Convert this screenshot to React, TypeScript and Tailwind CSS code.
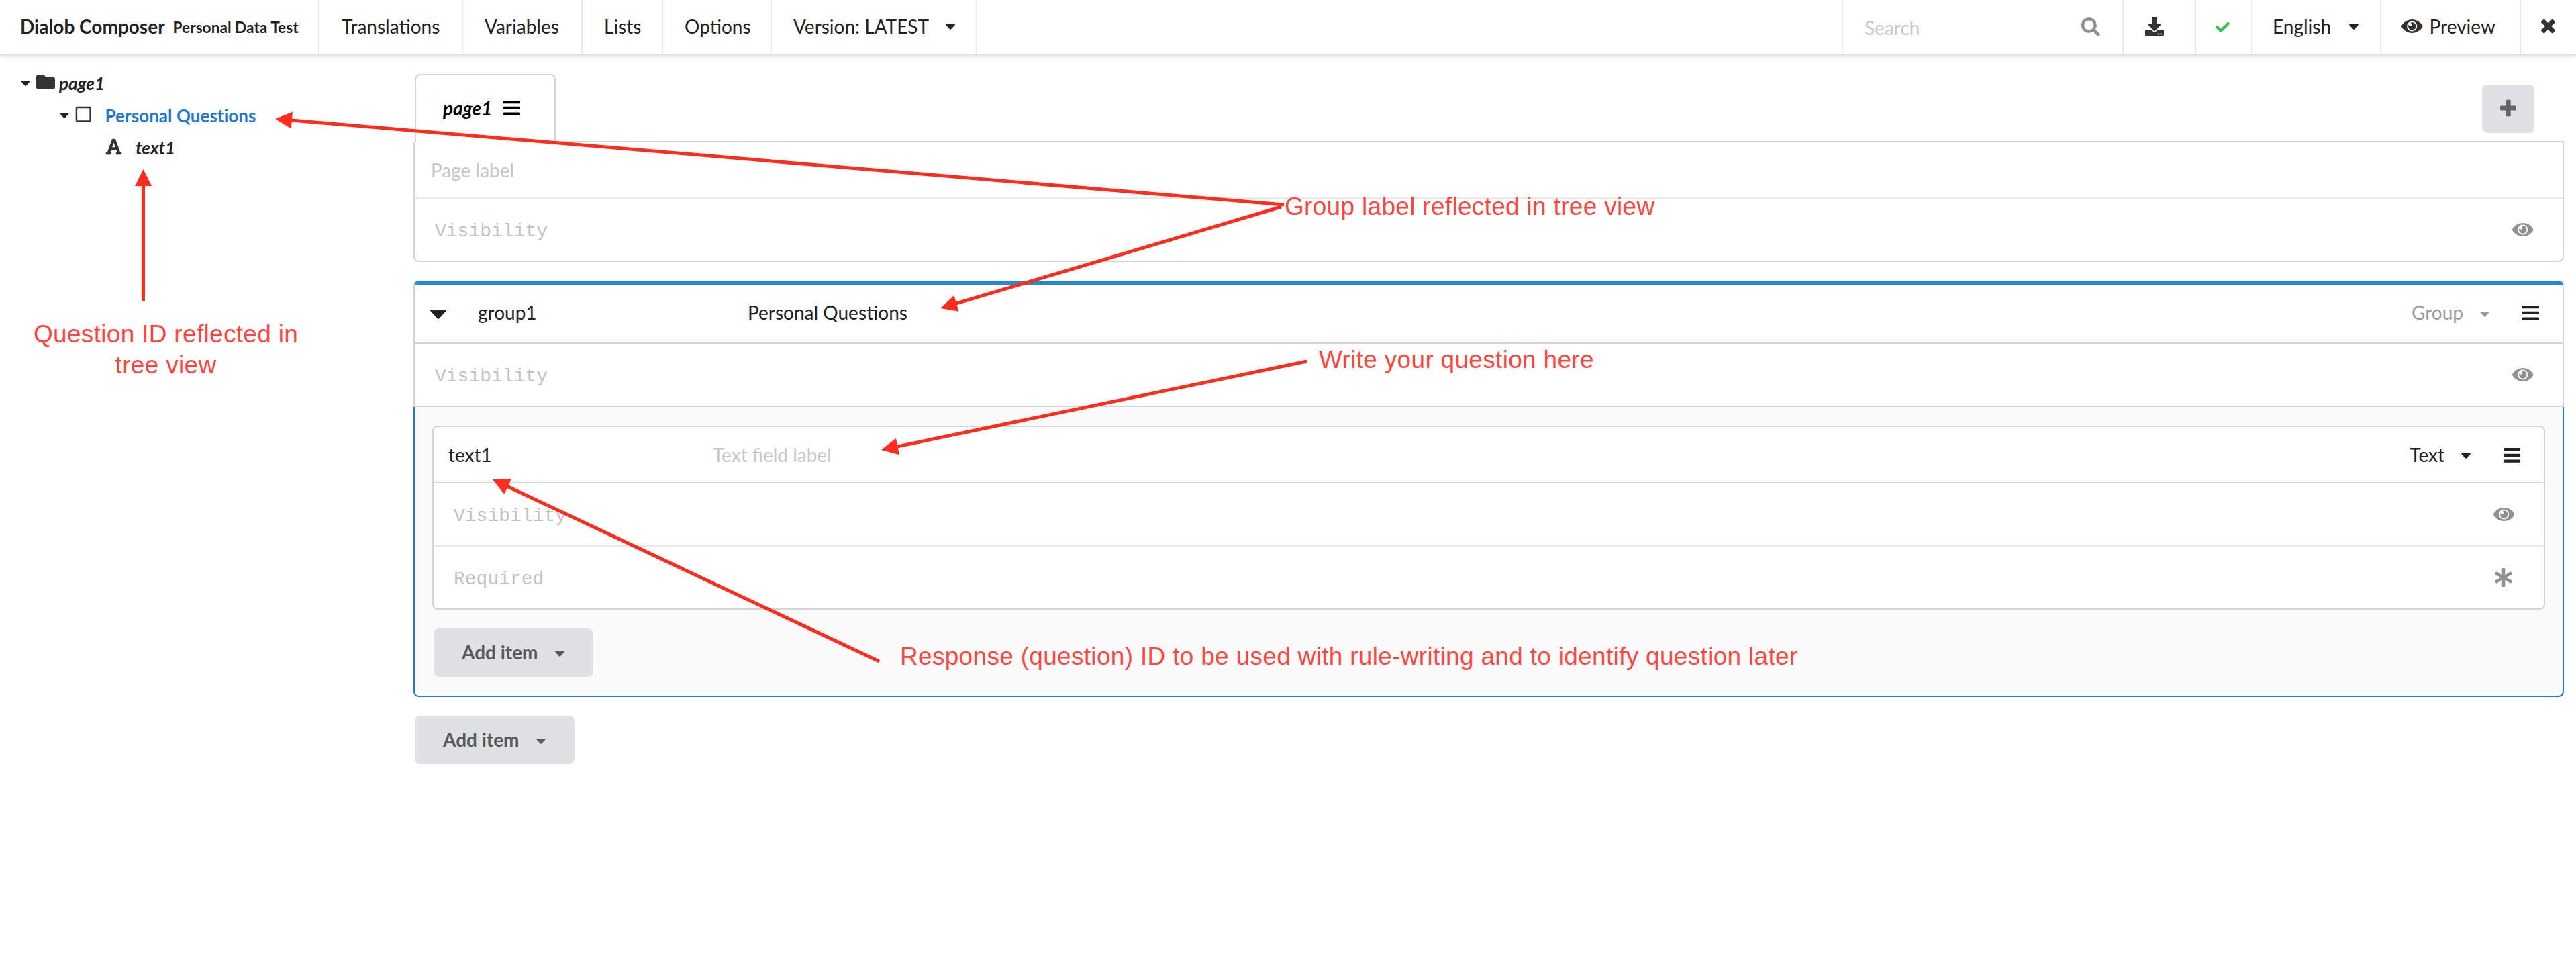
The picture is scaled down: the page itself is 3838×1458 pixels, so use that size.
import React from "react";
import { FaAsterisk, FaCheck, FaDownload, FaFolder, FaFont, FaRegSquare, FaSearch } from "react-icons/fa";

const RED = "#ff2d1d";

function Arrow({ x1, y1, x2, y2 }: { x1: number; y1: number; x2: number; y2: number }) {
  // (x2, y2) is the tip of the head
  const len = Math.hypot(x2 - x1, y2 - y1);
  const ux = (x2 - x1) / len;
  const uy = (y2 - y1) / len;
  const bx = x2 - ux * 25;
  const by = y2 - uy * 25;
  return (
    <g>
      <line x1={x1} y1={y1} x2={bx + ux} y2={by + uy} stroke={RED} strokeWidth={5} />
      <polygon
        fill={RED}
        points={`${x2},${y2} ${bx - uy * 12.5},${by + ux * 12.5} ${bx + uy * 12.5},${by - ux * 12.5}`}
      />
    </g>
  );
}

function Eye({ className = "" }: { className?: string }) {
  return (
    <svg viewBox="0 0 576 512" className={`h-7 w-[31.5px] shrink-0 ${className}`} fill="currentColor">
      <path d="M569.354 231.631C512.969 135.949 407.81 72 288 72 168.14 72 63.004 135.994 6.646 231.631a47.999 47.999 0 0 0 0 48.739C63.031 376.051 168.19 440 288 440c119.86 0 224.996-63.994 281.354-159.631a47.997 47.997 0 0 0 0-48.738zM288 392c-75.162 0-136-60.827-136-136 0-75.162 60.826-136 136-136 75.162 0 136 60.826 136 136 0 75.162-60.826 136-136 136zm104-136c0 57.438-46.562 104-104 104s-104-46.562-104-104c0-17.708 4.431-34.379 12.236-48.973l-.001.032c0 23.651 19.173 42.823 42.824 42.823s42.824-19.173 42.824-42.823c0-23.651-19.173-42.824-42.824-42.824l-.032.001C253.621 156.431 270.292 152 288 152c57.438 0 104 46.562 104 104z" />
    </svg>
  );
}

function Close() {
  return (
    <svg viewBox="0 0 384 512" className="h-7 w-[21px] shrink-0" fill="currentColor">
      <path d="M323.1 441l53.9-53.9c9.4-9.4 9.4-24.5 0-33.9L279.8 256l97.2-97.2c9.4-9.4 9.4-24.5 0-33.9L323.1 71c-9.4-9.4-24.5-9.4-33.9 0L192 168.2 94.8 71c-9.4-9.4-24.5-9.4-33.9 0L7 124.9c-9.4 9.4-9.4 24.5 0 33.9l97.2 97.2L7 353.2c-9.4 9.4-9.4 24.5 0 33.9L60.9 441c9.4 9.4 24.5 9.4 33.9 0l97.2-97.2 97.2 97.2c9.3 9.3 24.5 9.3 33.9 0z" />
    </svg>
  );
}

function Plus() {
  return (
    <svg viewBox="0 0 448 512" className="h-7 w-[24.5px] shrink-0" fill="currentColor">
      <path d="M448 294.2v-76.4c0-13.3-10.7-24-24-24H286.2V56c0-13.3-10.7-24-24-24h-76.4c-13.3 0-24 10.7-24 24v137.8H24c-13.3 0-24 10.7-24 24v76.4c0 13.3 10.7 24 24 24h137.8V456c0 13.3 10.7 24 24 24h76.4c13.3 0 24-10.7 24-24V318.2H424c13.3 0 24-10.7 24-24z" />
    </svg>
  );
}

function Bars({ className = "" }: { className?: string }) {
  return (
    <svg viewBox="0 0 25 22" className={`h-[22px] w-[25px] shrink-0 ${className}`} fill="currentColor">
      <rect y="0" width="25" height="4.2" rx="1" />
      <rect y="8.8" width="25" height="4.2" rx="1" />
      <rect y="17.6" width="25" height="4.2" rx="1" />
    </svg>
  );
}

function Caret({ className = "" }: { className?: string }) {
  return (
    <svg viewBox="0 0 14 8" className={`h-2 w-3.5 shrink-0 ${className}`} fill="currentColor">
      <path d="M0.6 0h12.8q1 .5.2 1.3L7.9 7.5q-.9.8-1.8 0L.4 1.3Q-.4.5.6 0z" />
    </svg>
  );
}

function MenuItem({ children, className }: { children: React.ReactNode; className: string }) {
  return (
    <div className={`flex h-full shrink-0 items-center border-r-2 border-[#e9e9ea] pb-0.5 whitespace-nowrap ${className}`}>
      {children}
    </div>
  );
}

function Rule({ label, icon, className }: { label: string; icon: React.ReactNode; className: string }) {
  return (
    <div className={`flex items-center justify-between pl-[30px] pr-[44px] ${className}`}>
      <span className="mt-1.5 font-['Liberation_Mono',monospace] text-[28px] font-normal text-[#c2c2c2]">{label}</span>
      <span className="mb-px text-[#919191]">{icon}</span>
    </div>
  );
}

function AddItem({ className = "" }: { className?: string }) {
  return (
    <button className={`flex h-18 w-[238px] items-center rounded-lg bg-[#e0e1e2] pb-0.5 pl-[42px] font-bold text-[#5a5a5a] ${className}`}>
      Add item
      <Caret className="mt-[5px] ml-[25px]" />
    </button>
  );
}

const note =
  "absolute whitespace-nowrap font-['Liberation_Sans',sans-serif] text-[37px] leading-[46px] tracking-[0.31px] text-[#ff4640]";

export default function App() {
  return (
    <div className="relative h-[1458px] w-[3838px] overflow-hidden bg-white font-['Lato',sans-serif] text-[28px] leading-[36px] text-[#212121]">
      <header className="flex h-[82px] items-center border-b-2 border-[#dcdcdc] shadow-[0_2px_6px_rgba(34,36,38,0.15)]">
        <MenuItem className="w-[476px] pl-[30px]">
          <span className="font-bold">Dialob Composer</span>
          <span className="mt-1 ml-3 text-[22.7px] font-bold">Personal Data Test</span>
        </MenuItem>
        <MenuItem className="w-[214px] pl-[33px]">Translations</MenuItem>
        <MenuItem className="w-[178px] pl-8">Variables</MenuItem>
        <MenuItem className="w-[120px] pl-8">Lists</MenuItem>
        <MenuItem className="w-[162px] pl-8">Options</MenuItem>
        <MenuItem className="w-[306px] pl-8">
          Version: LATEST
          <Caret className="mt-0.5 ml-[25px]" />
        </MenuItem>
        <div className="ml-auto flex h-full">
          <MenuItem className="w-[420px] border-l-2 pr-[33px] pl-8">
            <span className="mt-1 text-[#c7c7c7]">Search</span>
            <FaSearch className="mt-px ml-auto size-7 text-[#909090]" />
          </MenuItem>
          <MenuItem className="w-[108px] pl-8 text-[#333]"><FaDownload className="size-7" /></MenuItem>
          <MenuItem className="w-[84px] pl-[29px] text-[#3bbf55]"><FaCheck className="mt-0.5 size-[21px]" /></MenuItem>
          <MenuItem className="w-[192px] pl-[30px]">English<Caret className="mt-0.5 ml-[27px]" /></MenuItem>
          <MenuItem className="w-[208px] pl-[30px]"><Eye className="mr-[10px] text-[#333]" />Preview</MenuItem>
          <div className="flex w-[82px] items-center pb-0.5 pl-[30px] text-[#333]"><Close /></div>
        </div>
      </header>

      <main className="flex">
        <aside className="w-[616px] shrink-0 pt-[18px] pl-[31px] text-[26px] font-bold">
          <div className="flex h-12 items-center">
            <Caret />
            <FaFolder className="mb-1 ml-[9px] size-7 text-[#333]" />
            <span className="ml-1.5 italic">page1</span>
          </div>
          <div className="flex h-12 items-center pl-[58px]">
            <Caret />
            <FaRegSquare className="mb-[3px] ml-2 size-[26.5px] text-[#333]" />
            <span className="ml-[19px] tracking-[0.05px] text-[#2479cd]">Personal Questions</span>
          </div>
          <div className="flex h-12 items-center pl-[125px]">
            <FaFont className="mb-[3px] size-[27px] text-[#333]" />
            <span className="ml-[19px] italic">text1</span>
          </div>
        </aside>

        <section className="w-[3204px] shrink-0 pt-[28px]">
          <div className="flex h-[102px] pl-0.5">
            <div className="flex w-[210px] items-center rounded-t-lg border-2 border-b-0 border-[#d4d4d5] pb-0.5 pl-10 text-black">
              <span className="font-bold italic">page1</span>
              <Bars className="ml-[17px]" />
            </div>
            <div className="flex flex-1 justify-end border-b-2 border-[#d4d4d5] pr-[44px]">
              <button className="mt-4 flex h-18 w-[78px] items-center justify-center rounded-lg bg-[#e0e1e2] pb-0.5 text-[#636363]">
                <Plus />
              </button>
            </div>
          </div>
          <div className="rounded-b-lg border-2 border-t-0 border-[#d4d4d5]">
            <div className="flex h-21 items-center border-b-2 border-[#e9e9ea] pl-6 text-[#c7c7c7]">Page label</div>
            <Rule className="h-[92px]" label="Visibility" icon={<Eye />} />
          </div>

          <div className="mt-7 rounded-t-lg border-x-2 border-t-6 border-x-[#d4d4d5] border-t-[#2787cf]">
            <div className="flex h-22 items-center border-b-2 border-[#d4d4d5] pb-1 pl-[23px]">
              <svg viewBox="0 0 24 14" className="mt-1.5 h-3.5 w-6" fill="currentColor">
                <path d="M1 0h22q1.6 .8.4 2.2L13.4 13.2q-1.4 1.2-2.8 0L.6 2.2Q-.6.8 1 0z" />
              </svg>
              <span className="ml-[47px] w-[402px]">group1</span>
              <span>Personal Questions</span>
              <span className="ml-auto text-[#9b9b9b]">Group</span>
              <Caret className="mt-1.5 ml-[25px] text-[#9b9b9b]" />
              <Bars className="mt-0.5 mr-[35px] ml-[49px]" />
            </div>
            <Rule className="h-[94px] border-b-2 border-[#d4d4d5]" label="Visibility" icon={<Eye />} />
          </div>
          <div className="rounded-b-lg border-2 border-t-0 border-[#2479cd] bg-[#fafafa] px-[26px] pt-7 pb-7">
            <div className="rounded-lg border-2 border-[#d4d4d5] bg-white">
              <div className="flex h-[84px] items-center border-b-2 border-[#d4d4d5] pl-[22px]">
                <span className="w-[394px]">text1</span>
                <span className="text-[#c7c7c7]">Text field label</span>
                <span className="ml-auto">Text</span>
                <Caret className="mt-1 ml-[25px]" />
                <Bars className="mt-px mr-[35px] ml-[49px]" />
              </div>
              <Rule className="h-[94px] border-b-2 border-[#e9e9ea]" label="Visibility" icon={<Eye />} />
              <Rule className="h-[92px]" label="Required" icon={<FaAsterisk className="mr-0.5 size-7" />} />
            </div>
            <AddItem className="mt-7 ml-0.5" />
          </div>
          <AddItem className="mt-7 ml-0.5" />
        </section>
      </main>

      <svg className="pointer-events-none absolute top-0 left-0 h-[1458px] w-[3838px]" viewBox="0 0 3838 1458">
        <Arrow x1={213.5} y1={448} x2={213.5} y2={252} />
        <Arrow x1={1913} y1={305} x2={410} y2={177} />
        <Arrow x1={1909} y1={308} x2={1401} y2={459} />
        <Arrow x1={1947} y1={538} x2={1313} y2={670} />
        <Arrow x1={1310} y1={985} x2={734} y2={714} />
      </svg>
      <div className={`${note} top-[475px] left-[50px] text-center`}>Question ID reflected in<br />tree view</div>
      <div className={`${note} top-[285px] left-[1914px]`}>Group label reflected in tree view</div>
      <div className={`${note} top-[513px] left-[1965px]`}>Write your question here</div>
      <div className={`${note} top-[955px] left-[1341px]`}>Response (question) ID to be used with rule-writing and to identify question later</div>
    </div>
  );
}
